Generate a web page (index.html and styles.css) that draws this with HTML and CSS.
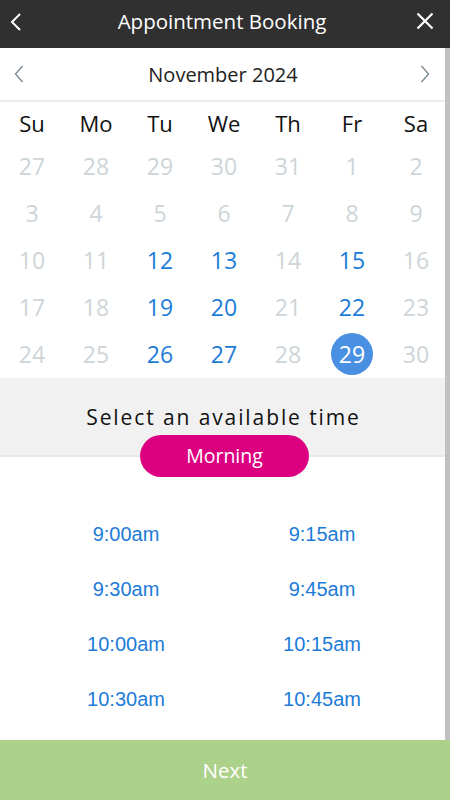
FILE: index.html
```html
<!DOCTYPE html>
<html lang="en">
<head>
<meta charset="utf-8">
<title>Appointment Booking</title>
<link rel="stylesheet" href="styles.css">
</head>
<body>
<div class="app">
  <header class="topbar">
    <button class="icon-btn back" aria-label="Back">
      <svg width="12" height="20" viewBox="0 0 12 20"><path d="M10 2 L2 10 L10 18" fill="none" stroke="#fff" stroke-width="2"/></svg>
    </button>
    <h1 class="title">Appointment Booking</h1>
    <button class="icon-btn close" aria-label="Close">
      <svg width="18" height="18" viewBox="0 0 18 18"><path d="M1.5 1.5 L16.5 16.5 M16.5 1.5 L1.5 16.5" fill="none" stroke="#fff" stroke-width="2.2"/></svg>
    </button>
  </header>

  <main class="content">
    <div class="month-bar">
      <svg class="chev" width="10" height="18" viewBox="0 0 10 18"><path d="M8.5 1 L1.5 9 L8.5 17" fill="none" stroke="#7c8b94" stroke-width="1.4"/></svg>
      <span class="month">November 2024</span>
      <svg class="chev" width="10" height="18" viewBox="0 0 10 18"><path d="M1.5 1 L8.5 9 L1.5 17" fill="none" stroke="#7c8b94" stroke-width="1.4"/></svg>
    </div>

    <div class="calendar">
      <div class="wd">Su</div><div class="wd">Mo</div><div class="wd">Tu</div><div class="wd">We</div><div class="wd">Th</div><div class="wd">Fr</div><div class="wd">Sa</div>

      <div class="day off">27</div><div class="day off">28</div><div class="day off">29</div><div class="day off">30</div><div class="day off">31</div><div class="day off">1</div><div class="day off">2</div>
      <div class="day off">3</div><div class="day off">4</div><div class="day off">5</div><div class="day off">6</div><div class="day off">7</div><div class="day off">8</div><div class="day off">9</div>
      <div class="day off">10</div><div class="day off">11</div><div class="day on">12</div><div class="day on">13</div><div class="day off">14</div><div class="day on">15</div><div class="day off">16</div>
      <div class="day off">17</div><div class="day off">18</div><div class="day on">19</div><div class="day on">20</div><div class="day off">21</div><div class="day on">22</div><div class="day off">23</div>
      <div class="day off">24</div><div class="day off">25</div><div class="day on">26</div><div class="day on">27</div><div class="day off">28</div><div class="day sel"><span>29</span></div><div class="day off">30</div>
    </div>

    <section class="time-head">
      <div class="time-title">Select an available time</div>
      <div class="pill">Morning</div>
    </section>

    <div class="times">
      <a class="slot">9:00am</a><a class="slot">9:15am</a>
      <a class="slot">9:30am</a><a class="slot">9:45am</a>
      <a class="slot">10:00am</a><a class="slot">10:15am</a>
      <a class="slot">10:30am</a><a class="slot">10:45am</a>
    </div>
  </main>

  <footer class="next">Next</footer>
</div>
</body>
</html>
```

FILE: styles.css
```css
* { box-sizing: border-box; }
html, body { margin: 0; padding: 0; }
body {
  width: 450px;
  height: 800px;
  overflow: hidden;
  font-family: "Open Sans", "Noto Sans", sans-serif;
  background: #fff;
}
.app {
  display: flex;
  flex-direction: column;
  height: 800px;
}
.topbar {
  height: 48px;
  background: #303030;
  display: flex;
  align-items: center;
  justify-content: space-between;
  padding: 0 16px 0 10px;
  flex: none;
}
.icon-btn {
  background: none;
  border: 0;
  padding: 0;
  display: flex;
  align-items: center;
  height: 24px;
}
.back { margin-top: -5px; }
.close { margin-top: -6px; }
.title {
  margin: -6px 0 0 6px;
  font-size: 20.5px;
  font-weight: 400;
  color: #fff;
}
.content {
  flex: 1;
  display: flex;
  flex-direction: column;
  border-right: 5px solid #c1c1c1;
}
.month-bar {
  height: 54px;
  border-bottom: 2px solid #e8ecef;
  display: flex;
  align-items: center;
  justify-content: space-between;
  padding: 0 15px 0 14px;
}
.month {
  font-size: 20px;
  color: #222;
  margin-left: 2px;
}
.calendar {
  display: grid;
  grid-template-columns: repeat(7, 64px);
  grid-auto-rows: 47px;
  grid-template-rows: 40px;
}
.wd {
  font-size: 22px;
  color: #111;
  display: flex;
  align-items: center;
  justify-content: center;
  padding-top: 2px;
}
.day {
  font-size: 23px;
  display: flex;
  align-items: center;
  justify-content: center;
}
.off { color: #cdd5d9; }
.on { color: #1d7bd8; }
.sel span {
  width: 42px;
  height: 42px;
  border-radius: 50%;
  background: #4a90e2;
  color: #fff;
  display: flex;
  align-items: center;
  justify-content: center;
}
.time-head {
  background: #f1f1f1;
  border-bottom: 2px solid #e5e9ec;
  height: 79px;
  margin-top: 1px;
  display: flex;
  flex-direction: column;
  align-items: center;
  padding-top: 25px;
}
.time-title {
  font-size: 21px;
  letter-spacing: 1.9px;
  color: #111;
  line-height: 28px;
  margin-left: 2px;
}
.pill {
  margin-top: 4px;
  margin-left: 4px;
  width: 169px;
  height: 42px;
  border-radius: 21px;
  background: #dc0080;
  color: #fff;
  font-size: 19.5px;
  display: flex;
  align-items: center;
  justify-content: center;
  padding-bottom: 2px;
  position: relative;
  z-index: 1;
  flex: none;
}
.times {
  display: grid;
  grid-template-columns: 196px 196px;
  grid-auto-rows: 55px;
  padding: 50px 0 0 28px;
}
.slot {
  font-family: "Liberation Sans", Arial, sans-serif;
  font-size: 20px;
  color: #1d7bd8;
  display: flex;
  align-items: center;
  justify-content: center;
}
.next {
  flex: none;
  height: 60px;
  background: #acd18a;
  color: #fff;
  font-size: 20.5px;
  display: flex;
  align-items: center;
  justify-content: center;
  padding-bottom: 1px;
}
```
